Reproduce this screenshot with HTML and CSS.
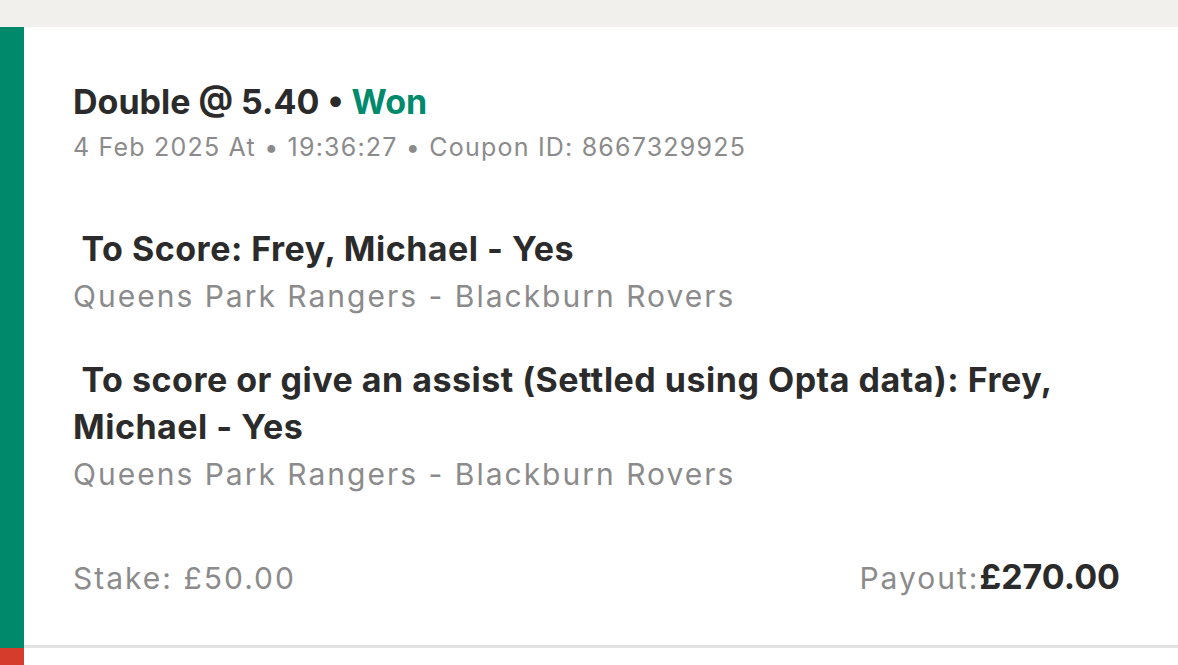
FILE: index.html
```html
<!DOCTYPE html>
<html>
<head>
<meta charset="utf-8">
<link rel="stylesheet" href="styles.css">
</head>
<body>
<div class="topband"></div>
<div class="bet">
  <div class="status-bar"></div>
  <div class="card">
    <div class="header">
      <div class="title">Double @ 5.40 <span class="dot">•</span> <span class="won">Won</span></div>
      <div class="meta">4 Feb 2025 At • 19:36:27 • Coupon ID: 8667329925</div>
    </div>
    <div class="leg leg-first">
      <div class="leg-title">&nbsp;To Score: Frey, Michael - Yes</div>
      <div class="leg-event">Queens Park Rangers - Blackburn Rovers</div>
    </div>
    <div class="leg">
      <div class="leg-title">&nbsp;To score or give an assist (Settled using Opta data): Frey, Michael - Yes</div>
      <div class="leg-event">Queens Park Rangers - Blackburn Rovers</div>
    </div>
    <div class="footer">
      <div class="stake">Stake: £50.00</div>
      <div class="payout">Payout:<b>£270.00</b></div>
    </div>
  </div>
</div>
<div class="next">
  <div class="next-bar"></div>
</div>
</body>
</html>
```
FILE: styles.css
```css
* { box-sizing: border-box; }
html, body { margin: 0; padding: 0; background: #ffffff; }
body { font-family: Inter, "Liberation Sans", sans-serif; width: 1178px; height: 665px; overflow: hidden; }
.topband { height: 27px; background: #f1f0ed; }
.bet { display: flex; }
.status-bar { width: 24px; background: #008a6c; flex: none; }
.card { flex: 1; background: #fff; border-bottom: 3px solid #e2e2e2; padding: 55px 58px 47px 49px; }
.title { font-size: 34px; font-weight: 700; color: #2b2b2b; line-height: 40px; }
.won { color: #008a6c; }
.meta { font-size: 25px; color: #8b8b8b; line-height: 36px; margin-top: 7px; letter-spacing: 1.2px; }
.leg { margin-top: 36px; }
.leg-first { margin-top: 60px; }
.leg-title { font-size: 34px; font-weight: 700; color: #2b2b2b; line-height: 47px; letter-spacing: 0.5px; }
.leg-event { font-size: 30px; color: #8b8b8b; line-height: 48px; letter-spacing: 2px; }
.footer { display: flex; justify-content: space-between; align-items: baseline; margin-top: 59px; font-size: 30px; line-height: 40px; color: #8b8b8b; letter-spacing: 2px; }
.payout b { color: #2b2b2b; font-weight: 700; font-size: 34px; letter-spacing: 0; }
.next { height: 30px; }
.next-bar { width: 24px; height: 30px; background: #d63c2c; }
```
